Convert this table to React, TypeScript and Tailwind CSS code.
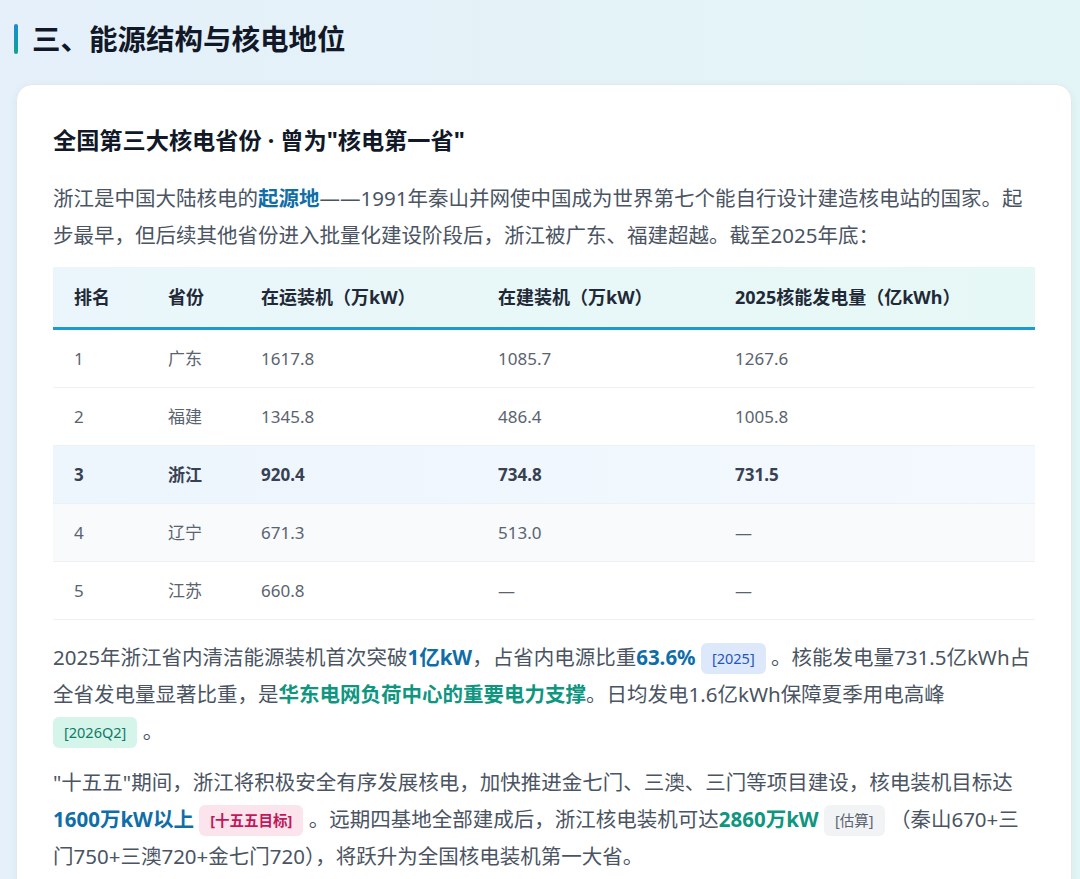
import React from 'react'

const rows = [
  { rank: '1', prov: '广东', run: '1617.8', build: '1085.7', gen: '1267.6' },
  { rank: '2', prov: '福建', run: '1345.8', build: '486.4', gen: '1005.8' },
  { rank: '3', prov: '浙江', run: '920.4', build: '734.8', gen: '731.5', hl: true },
  { rank: '4', prov: '辽宁', run: '671.3', build: '513.0', gen: '—', alt: true },
  { rank: '5', prov: '江苏', run: '660.8', build: '—', gen: '—' },
]

const cols = 'grid grid-cols-[94px_93px_237px_237px_1fr] [&>div]:pl-[21px]'

function Tag({ children, tone }: { children: React.ReactNode; tone: 'blue' | 'green' | 'pink' | 'gray' }) {
  const map = {
    blue: 'bg-[#dde9fb] text-[#2456b8]',
    green: 'bg-[#d5f5ea] text-[#0f7a66]',
    pink: 'bg-[#fbe4ec] text-[#c2185b] font-bold',
    gray: 'bg-[#f1f3f5] text-[#5b6470]',
  }
  return (
    <span className={`inline-block rounded-[6px] px-[11px] py-[3px] align-[1px] text-[14.5px] leading-[25px] ${map[tone]}`}>
      {children}
    </span>
  )
}

export default function App() {
  return (
    <div
      className="min-h-[879px] w-full overflow-hidden bg-gradient-to-r from-[#e5f0fa] to-[#e3f5f6] text-[#4a5462]"
      style={{ fontFamily: '"Noto Sans", "Noto Sans CJK SC", sans-serif' }}
    >
      {/* section title */}
      <div className="flex items-center gap-[14px] pl-[14px] pt-[22px]">
        <div className="h-[30px] w-[4px] rounded-full bg-gradient-to-b from-[#1e88d8] to-[#15a38f]" />
        <h2 className="text-[28.5px] font-bold leading-[34px] text-[#111827]">三、能源结构与核电地位</h2>
      </div>

      {/* card */}
      <div className="ml-[16px] mr-[8px] mt-[28px] rounded-[16px] border border-[#e3e8ee] bg-white px-[36px] pb-[40px] pt-[40px] shadow-[0_2px_8px_rgba(30,80,120,0.06)]">
        <h3 className="text-[23.2px] font-bold leading-[30px] text-[#111827]">全国第三大核电省份 · 曾为"核电第一省"</h3>

        <p className="mt-[25px] text-[20.5px] leading-[37px]">
          浙江是中国大陆核电的<b className="text-[#0f6ea8]">起源地</b>——1991年秦山并网使中国成为世界第七个能自行设计建造核电站的国家。起步最早，但后续其他省份进入批量化建设阶段后，浙江被广东、福建超越。截至2025年底：
        </p>

        {/* table */}
        <div className="mt-[13px] text-[17px]">
          <div className={`${cols} h-[63px] items-center border-b-[3px] border-[#1b9bd1] bg-gradient-to-r from-[#eaf6fb] to-[#e6f8f5] text-[18px] font-bold text-[#1f2937]`}>
            <div>排名</div>
            <div>省份</div>
            <div>在运装机（万kW）</div>
            <div>在建装机（万kW）</div>
            <div>2025核能发电量（亿kWh）</div>
          </div>
          {rows.map((r) => (
            <div
              key={r.rank}
              className={`${cols} h-[58px] items-center border-b border-[#eef1f4] ${
                r.hl
                  ? 'bg-gradient-to-r from-[#edf5fd] to-[#f3f9fe] font-bold text-[#374151]'
                  : r.alt
                    ? 'bg-[#f8fafc] text-[#5a6370]'
                    : 'text-[#5a6370]'
              }`}
            >
              <div>{r.rank}</div>
              <div>{r.prov}</div>
              <div>{r.run}</div>
              <div>{r.build}</div>
              <div>{r.gen}</div>
            </div>
          ))}
        </div>

        <p className="mt-[19px] text-[20.5px] leading-[37px]">
          2025年浙江省内清洁能源装机首次突破<b className="text-[#0f6ea8]">1亿kW</b>，占省内电源比重<b className="text-[#0f6ea8]">63.6%</b>{' '}
          <Tag tone="blue">[2025]</Tag>{' '}。核能发电量731.5亿kWh占全省发电量显著比重，是<b className="text-[#0e9680]">华东电网负荷中心的重要电力支撑</b>。日均发电1.6亿kWh保障夏季用电高峰{' '}
          <span className="whitespace-nowrap">
            <Tag tone="green">[2026Q2]</Tag> 。
          </span>
        </p>

        <p className="mt-[14px] text-[20.5px] leading-[37px]">
          "十五五"期间，浙江将积极安全有序发展核电，加快推进金七门、三澳、三门等项目建设，核电装机目标达<b className="text-[#0f6ea8]">1600万kW以上</b>{' '}
          <Tag tone="pink">[十五五目标]</Tag>{' '}。远期四基地全部建成后，浙江核电装机可达<b className="text-[#0e9680]">2860万kW</b>{' '}
          <Tag tone="gray">[估算]</Tag>{' '}（秦山670+三门750+三澳720+金七门720），将跃升为全国核电装机第一大省。
        </p>
      </div>
    </div>
  )
}
